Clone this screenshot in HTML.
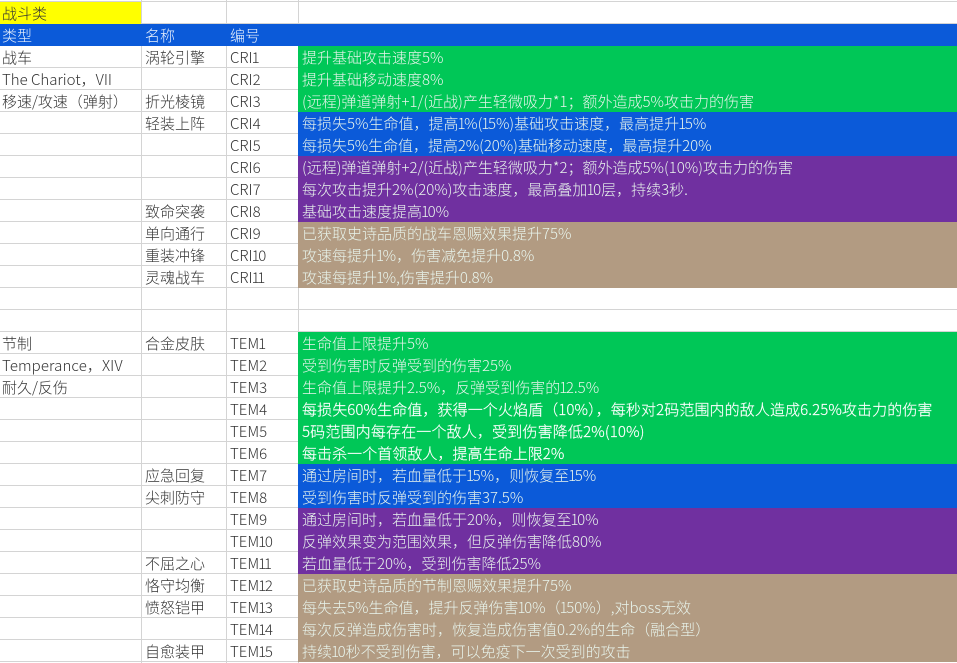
<!DOCTYPE html>
<html><head><meta charset="utf-8"><style>
html,body{margin:0;padding:0;background:#fff}
#s{position:relative;width:957px;height:663px;overflow:hidden;background:#fff;font:300 15px/22px "Noto Sans CJK SC","WenQuanYi Zen Hei","Liberation Sans",sans-serif;color:#333}
.r{position:absolute;left:0;width:957px;height:22px;box-sizing:border-box;border-bottom:1px solid #d4d4d4}
.r>div{position:absolute;top:0;height:22px;white-space:nowrap;line-height:23px}
.a{left:2px}.b{left:145px}.c{left:230px}
.d{left:298px;width:659px;padding-left:4px;box-sizing:border-box;color:#e8f4ec}
.v{position:absolute;top:0;width:1px;height:663px;background:#d4d4d4}
.g .d{background:#00c757}.u .d{background:#0b5ad9}.p .d{background:#7030a0}.t .d{background:#b29b82}
.w .d{color:#fff;-webkit-text-stroke:.2px #fff}
.h{background:#0b5ad9;border:0}.h>div{color:#e8f0fc}
i{font-style:normal;margin-left:-1px;margin-right:-1.4px}
</style></head><body><div id="s">
<div class="v" style="left:141px"></div><div class="v" style="left:226px"></div><div class="v" style="left:298px"></div>
<div class="r" style="top:-20px"></div>
<div class="r" style="top:2px"><div class="a" style="left:0;width:141px;background:#ff0;padding-left:2px;box-sizing:border-box">战斗类</div></div>
<div class="r h" style="top:24px"><div class="a">类型</div><div class="b">名称</div><div class="c">编号</div></div>
<div class="r g" style="top:46px"><div class="a">战车</div><div class="b">涡轮引擎</div><div class="c">CRI<i>1</i></div><div class="d">提升基础攻击速度5%</div></div>
<div class="r g" style="top:68px"><div class="a">The Chariot，VII</div><div class="c">CRI2</div><div class="d">提升基础移动速度8%</div></div>
<div class="r g" style="top:90px"><div class="a">移速/攻速（弹射）</div><div class="b">折光棱镜</div><div class="c">CRI3</div><div class="d">(远程)弹道弹射+1/(近战)产生轻微吸力*1；额外造成5%攻击力的伤害</div></div>
<div class="r u" style="top:112px"><div class="b">轻装上阵</div><div class="c">CRI4</div><div class="d">每损失5%生命值，提高<i>1</i>%(<i>1</i>5%)基础攻击速度，最高提升<i>1</i>5%</div></div>
<div class="r u" style="top:134px"><div class="c">CRI5</div><div class="d" style="letter-spacing:-.06px">每损失5%生命值，提高2%(20%)基础移动速度，最高提升20%</div></div>
<div class="r p" style="top:156px"><div class="c">CRI6</div><div class="d">(远程)弹道弹射+2/(近战)产生轻微吸力*2；额外造成5%(10%)攻击力的伤害</div></div>
<div class="r p" style="top:178px"><div class="c">CRI7</div><div class="d">每次攻击提升2%(20%)攻击速度，最高叠加<i>1</i>0层，持续3秒.</div></div>
<div class="r p" style="top:200px"><div class="b">致命突袭</div><div class="c">CRI8</div><div class="d">基础攻击速度提高<i>1</i>0%</div></div>
<div class="r t" style="top:222px"><div class="b">单向通行</div><div class="c">CRI9</div><div class="d">已获取史诗品质的战车恩赐效果提升75%</div></div>
<div class="r t" style="top:244px"><div class="b">重装冲锋</div><div class="c">CRI<i>1</i>0</div><div class="d">攻速每提升<i>1</i>%，伤害减免提升0.8%</div></div>
<div class="r t" style="top:266px"><div class="b">灵魂战车</div><div class="c">CRI<i>1</i><i>1</i></div><div class="d">攻速每提升<i>1</i>%,伤害提升0.8%</div></div>
<div class="r" style="top:288px"></div>
<div class="r" style="top:310px"></div>
<div class="r g" style="top:332px"><div class="a">节制</div><div class="b">合金皮肤</div><div class="c">TEM<i>1</i></div><div class="d">生命值上限提升5%</div></div>
<div class="r g" style="top:354px"><div class="a" style="letter-spacing:.1px">Temperance，XIV</div><div class="c">TEM2</div><div class="d">受到伤害时反弹受到的伤害25%</div></div>
<div class="r g" style="top:376px"><div class="a">耐久/反伤</div><div class="c">TEM3</div><div class="d">生命值上限提升2.5%，反弹受到伤害的<i>1</i>2.5%</div></div>
<div class="r g w" style="top:398px"><div class="c">TEM4</div><div class="d" style="letter-spacing:.1px">每损失60%生命值，获得一个火焰盾（10%），每秒对2码范围内的敌人造成6.25%攻击力的伤害</div></div>
<div class="r g w" style="top:420px"><div class="c">TEM5</div><div class="d" style="letter-spacing:.16px">5码范围内每存在一个敌人，受到伤害降低2%(10%)</div></div>
<div class="r g w" style="top:442px"><div class="c">TEM6</div><div class="d" style="letter-spacing:.05px">每击杀一个首领敌人，提高生命上限2%</div></div>
<div class="r u" style="top:464px"><div class="b">应急回复</div><div class="c">TEM7</div><div class="d">通过房间时，若血量低于<i>1</i>5%，则恢复至<i>1</i>5%</div></div>
<div class="r u" style="top:486px"><div class="b">尖刺防守</div><div class="c">TEM8</div><div class="d">受到伤害时反弹受到的伤害37.5%</div></div>
<div class="r p" style="top:508px"><div class="c">TEM9</div><div class="d">通过房间时，若血量低于20%，则恢复至<i>1</i>0%</div></div>
<div class="r p" style="top:530px"><div class="c">TEM<i>1</i>0</div><div class="d">反弹效果变为范围效果，但反弹伤害降低80%</div></div>
<div class="r p" style="top:552px"><div class="b">不屈之心</div><div class="c">TEM<i>1</i><i>1</i></div><div class="d">若血量低于20%，受到伤害降低25%</div></div>
<div class="r t" style="top:574px"><div class="b">恪守均衡</div><div class="c">TEM<i>1</i>2</div><div class="d">已获取史诗品质的节制恩赐效果提升75%</div></div>
<div class="r t" style="top:596px"><div class="b">愤怒铠甲</div><div class="c">TEM<i>1</i>3</div><div class="d">每失去5%生命值，提升反弹伤害<i>1</i>0%（<i>1</i>50%）,对boss无效</div></div>
<div class="r t" style="top:618px"><div class="c">TEM<i>1</i>4</div><div class="d">每次反弹造成伤害时，恢复造成伤害值0.2%的生命（融合型）</div></div>
<div class="r t" style="top:640px"><div class="b">自愈装甲</div><div class="c">TEM<i>1</i>5</div><div class="d">持续<i>1</i>0秒不受到伤害，可以免疫下一次受到的攻击</div></div>
</div></body></html>
